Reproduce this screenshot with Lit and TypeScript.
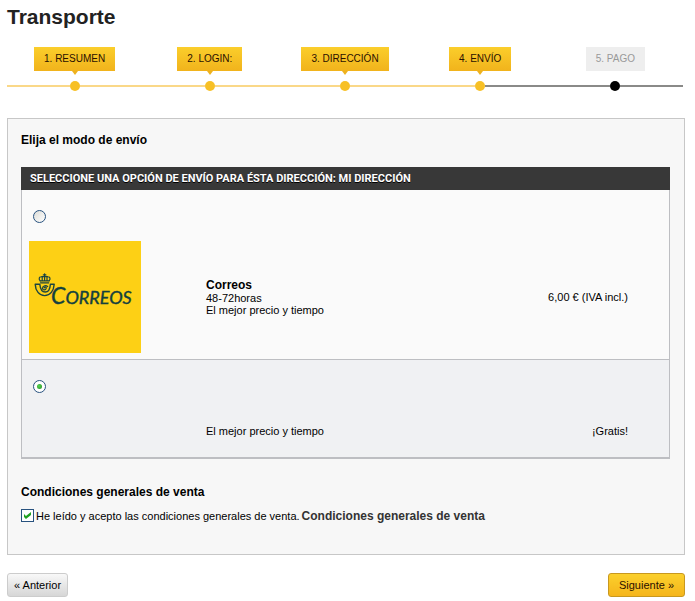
import { LitElement, html, css, svg, nothing } from "lit";
import { customElement, property, state } from "lit/decorators.js";
import { classMap } from "lit/directives/class-map.js";

interface Step {
  label: string;
  done: boolean;
}

const STEPS: Step[] = [
  { label: "1. RESUMEN", done: true },
  { label: "2. LOGIN:", done: true },
  { label: "3. DIRECCIÓN", done: true },
  { label: "4. ENVÍO", done: true },
  { label: "5. PAGO", done: false },
];

@customElement("checkout-steps")
class CheckoutSteps extends LitElement {
  @property({ attribute: false }) steps: Step[] = [];

  static styles = css`
    :host {
      display: block;
    }
    .steps {
      display: grid;
      grid-auto-flow: column;
      grid-auto-columns: 1fr;
      list-style: none;
      margin: 0;
      padding: 0;
    }
    .step {
      display: flex;
      flex-direction: column;
      align-items: center;
    }
    .tag {
      position: relative;
      box-sizing: border-box;
      height: 24px;
      margin-bottom: 10px;
      padding: 0 10px;
      font-size: 10px;
      line-height: 24px;
      white-space: nowrap;
      color: #2a1000;
      background: linear-gradient(#fbce2b, #f1b31c);
    }
    .tag::after {
      content: "";
      position: absolute;
      top: 100%;
      left: 50%;
      margin-left: -3px;
      border: 3px solid transparent;
      border-top: 4px solid #eeb21f;
      border-bottom: 0;
    }
    .pending .tag {
      color: #999;
      background: #eee;
    }
    .pending .tag::after {
      content: none;
    }
    .track {
      display: grid;
      grid-template-columns: 1fr 10px 1fr;
      align-items: center;
      width: 100%;
    }
    .line {
      height: 2px;
      background: #fad888;
    }
    .line.off {
      background: #8a8a88;
    }
    .dot {
      height: 10px;
      border-radius: 50%;
      background: #f7c025;
    }
    .pending .dot {
      background: #000;
    }
  `;

  render() {
    return html`<ol class="steps">
      ${this.steps.map((s, i) => {
        const next = this.steps[i + 1];
        const nextOff = next ? !next.done : !s.done;
        return html`<li class=${classMap({ step: true, pending: !s.done })}>
          <span class="tag">${s.label}</span>
          <span class="track">
            <span class=${classMap({ line: true, off: !s.done })}></span>
            <span class="dot"></span>
            <span class=${classMap({ line: true, off: nextOff })}></span>
          </span>
        </li>`;
      })}
    </ol>`;
  }
}

// Crowned post horn on the carrier's yellow ground.
const correosEmblem = svg`
  <rect width="112" height="112" fill="#fdd015"/>
  <g fill="none" stroke="#1b4440" stroke-linecap="round" stroke-linejoin="round">
    <path stroke-width="1.2" d="M11.500 41.800h8.200M11.200 40c-2.200-2.600-.6-4.600 1.700-4.200M20 40c2.200-2.600.6-4.600-1.700-4.200M13.200 35.800v4M18 35.800v4M15.600 34.200v5.600M11.300 39.800h8.600M12.600 35.700h6M14.300 33.900h2.600M15.600 32.800v2"/>
    <path stroke-width="1.4" d="M6.200 43.200h4.600c.5 4.800 2.500 7.800 5.400 7.800 4 0 4.900-3.500 5.200-7.800h3.800c-.4 6.600-4 11.400-9.600 11.400-5.200 0-9.200-4.800-9.400-11.400z"/>
    <path stroke-width="1.200" d="M18.700 45.600c-1.600-1.700-4.900-1.100-5.200 1.500-.2 2.200 3.200 2.500 3.700.2.300-1.400-1.600-1.700-2-.4"/>
  </g>`;

@customElement("app-root")
class AppRoot extends LitElement {
  @state() private carrier = "gratis";
  @state() private accepted = true;

  static styles = css`
    :host {
      display: block;
      padding: 5px 10px 4px 7px;
      font-family: "Liberation Sans", Arial, sans-serif;
      font-size: 11px;
      line-height: 12px;
      color: #000;
    }
    h1 {
      margin: 0;
      font-size: 21px;
      line-height: 24px;
      color: #222;
    }
    checkout-steps {
      margin: 18px 2px 27px 0;
    }
    .panel {
      padding: 14px;
      padding-left: 13px;
      border: 1px solid #c7c7c7;
      background: #f7f7f7;
    }
    h2 {
      margin: 0;
      font-size: 12px;
      line-height: 14px;
    }
    .address {
      margin: 20px 0 26px;
    }
    h3 {
      margin: 0;
      padding: 0 9px;
      font-family: Roboto, sans-serif;
      font-size: 11px;
      line-height: 23px;
      text-transform: uppercase;
      text-shadow: 0 1px 0 #000;
      color: #fff;
      background: #383838;
    }
    .options {
      border: 1px solid #bdbec2;
      border-top: 0;
      border-bottom-width: 2px;
    }
    .option {
      display: block;
      padding: 20px 41px 6px 7px;
      background: #fafafa;
    }
    .option + .option {
      border-top: 1px solid #bdbec2;
    }
    .option.selected {
      background: #f0f1f3;
    }
    .details {
      display: grid;
      grid-template-columns: 112px 1fr auto;
      column-gap: 65px;
      align-items: center;
      min-height: 40px;
      margin-top: 18px;
    }
    .logo {
      display: block;
      width: 112px;
      height: 112px;
    }
    .wordmark {
      font-family: Lato, sans-serif;
      font-style: italic;
      font-weight: 400;
      fill: #14403f;
      stroke: #14403f;
      stroke-width: 0.4px;
    }
    .name {
      display: block;
      font-size: 12px;
      line-height: 14px;
    }
    .delay {
      display: block;
    }
    input {
      appearance: none;
      box-sizing: border-box;
      display: block;
      width: 13px;
      height: 13px;
      margin: 0;
      border: 1px solid #28527f;
      background: linear-gradient(135deg, #dcdcd7, #fff);
    }
    input[type="radio"] {
      margin-left: 4px;
      border-radius: 50%;
    }
    input:checked {
      background: #fff;
    }
    input:checked::before {
      content: "";
      display: block;
    }
    input[type="radio"]:checked::before {
      width: 5px;
      height: 5px;
      margin: 3px;
      border-radius: 50%;
      background: radial-gradient(circle at 40% 40%, #55d551, #218a21);
    }
    input[type="checkbox"]:checked::before {
      width: 7px;
      height: 7px;
      margin: 2px;
      background: #21a121;
      clip-path: polygon(0 28%, 28% 57%, 100% 0, 100% 43%, 28% 100%, 0 72%);
    }
    .terms {
      display: flex;
      align-items: center;
      gap: 2px;
      margin: 10px 0 18px;
    }
    .terms a {
      font-size: 12px;
      font-weight: 700;
      color: #333;
      text-decoration: none;
    }
    .actions {
      display: flex;
      justify-content: space-between;
      align-items: center;
      margin-top: 18px;
    }
    button {
      box-sizing: border-box;
      height: 24px;
      padding: 0 6px;
      border: 1px solid #ccc;
      border-radius: 3px;
      font: 11px/20px "Liberation Sans", Arial, sans-serif;
      color: #000;
      background: linear-gradient(#f8f8f8, #d6d6d6);
    }
    .next {
      padding: 0 10px;
      border-color: #c8981f;
      color: #2a1000;
      background: linear-gradient(#fbd02c, #f5b51c);
    }
  `;

  private option(id: string, name: string, delay: string, note: string, price: string) {
    const selected = this.carrier === id;
    return html`<label class=${classMap({ option: true, selected })}>
      <input type="radio" name="carrier" .checked=${selected} @change=${() => (this.carrier = id)} />
      <span class="details">
        <span>
          ${name
            ? html`<svg class="logo" viewBox="0 0 112 112" role="img" aria-label="Correos">
                ${correosEmblem}
                <text class="wordmark" x="22" y="63" font-size="23">C<tspan font-size="18">ORREOS</tspan></text>
              </svg>`
            : nothing}
        </span>
        <span>
          ${name ? html`<strong class="name">${name}</strong>` : nothing}
          ${delay ? html`<span class="delay">${delay}</span>` : nothing}
          <span class="delay">${note}</span>
        </span>
        <span>${price}</span>
      </span>
    </label>`;
  }

  render() {
    return html`
      <h1>Transporte</h1>
      <checkout-steps .steps=${STEPS}></checkout-steps>
      <main class="panel">
        <h2>Elija el modo de envío</h2>
        <section class="address">
          <h3>Seleccione una opción de envío para ésta dirección: Mi dirección</h3>
          <div class="options">
            ${this.option("correos", "Correos", "48-72horas", "El mejor precio y tiempo", "6,00 € (IVA incl.)")}
            ${this.option("gratis", "", "", "El mejor precio y tiempo", "¡Gratis!")}
          </div>
        </section>
        <h2>Condiciones generales de venta</h2>
        <div class="terms">
          <input
            id="cgv"
            type="checkbox"
            .checked=${this.accepted}
            @change=${(e: Event) => (this.accepted = (e.target as HTMLInputElement).checked)}
          />
          <label for="cgv">He leído y acepto las condiciones generales de venta.</label>
          <a href="#condiciones">Condiciones generales de venta</a>
        </div>
      </main>
      <div class="actions">
        <button type="button">« Anterior</button>
        <button type="submit" class="next">Siguiente »</button>
      </div>
    `;
  }
}
